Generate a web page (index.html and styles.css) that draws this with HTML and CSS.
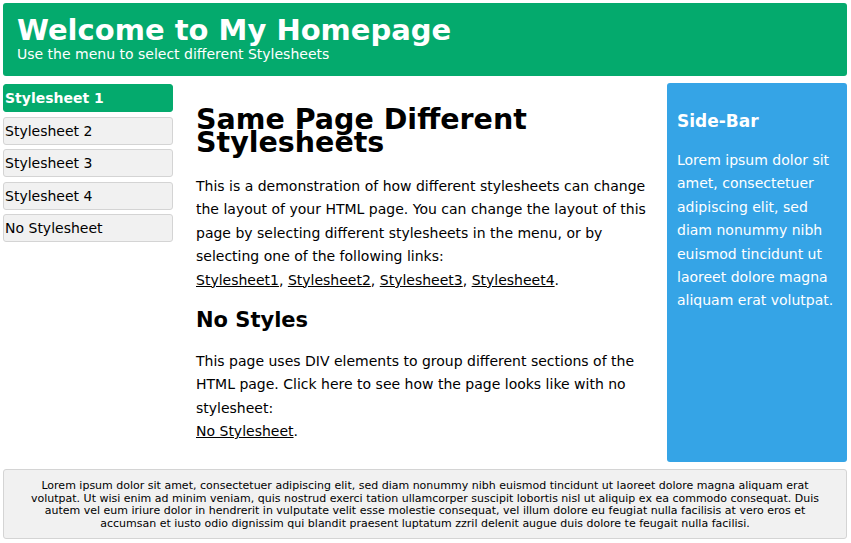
FILE: index.html
```html
<!DOCTYPE html>
<html>
<head>
<meta charset="utf-8">
<title>Same Page Different Stylesheets</title>
<link rel="stylesheet" href="styles.css">
</head>
<body>
<div class="header">
  <h1>Welcome to My Homepage</h1>
  <p>Use the menu to select different Stylesheets</p>
</div>
<div class="row">
  <div class="menu">
    <a class="menuitem active" href="#">Stylesheet 1</a>
    <a class="menuitem" href="#">Stylesheet 2</a>
    <a class="menuitem" href="#">Stylesheet 3</a>
    <a class="menuitem" href="#">Stylesheet 4</a>
    <a class="menuitem" href="#">No Stylesheet</a>
  </div>
  <div class="main">
    <h2 class="title">Same Page Different Stylesheets</h2>
    <p>This is a demonstration of how different stylesheets can change the layout of your HTML page. You can change the layout of this page by selecting different stylesheets in the menu, or by selecting one of the following links:<br><a href="#">Stylesheet1</a>, <a href="#">Stylesheet2</a>, <a href="#">Stylesheet3</a>, <a href="#">Stylesheet4</a>.</p>
    <h3 class="subtitle">No Styles</h3>
    <p>This page uses DIV elements to group different sections of the HTML page. Click here to see how the page looks like with no stylesheet:<br><a href="#">No Stylesheet</a>.</p>
  </div>
  <div class="sidebar">
    <h3>Side-Bar</h3>
    <p>Lorem ipsum dolor sit amet, consectetuer adipiscing elit, sed diam nonummy nibh euismod tincidunt ut laoreet dolore magna aliquam erat volutpat.</p>
  </div>
</div>
<div class="footer">
  <p>Lorem ipsum dolor sit amet, consectetuer adipiscing elit, sed diam nonummy nibh euismod tincidunt ut laoreet dolore magna aliquam erat volutpat. Ut wisi enim ad minim veniam, quis nostrud exerci tation ullamcorper suscipit lobortis nisl ut aliquip ex ea commodo consequat. Duis autem vel eum iriure dolor in hendrerit in vulputate velit esse molestie consequat, vel illum dolore eu feugiat nulla facilisis at vero eros et accumsan et iusto odio dignissim qui blandit praesent luptatum zzril delenit augue duis dolore te feugait nulla facilisi.</p>
</div>
</body>
</html>
```

FILE: styles.css
```css
body {
  margin: 3px 4px 3px 3px;
  font-family: Verdana, "DejaVu Sans", sans-serif;
  font-size: 14px;
  color: #000;
  background: #fff;
}
.header {
  background-color: #04aa6d;
  color: #fff;
  border-radius: 3px;
  padding: 10px 14px 14px;
  height: 49px;
}
.header h1 {
  margin: 0;
  font-size: 29px;
  line-height: 34px;
}
.header p {
  margin: 0;
  font-size: 14px;
  line-height: 14px;
}
.row {
  display: flex;
  align-items: flex-start;
  margin-top: 7px;
}
.menu {
  width: 170px;
  flex: none;
  display: flex;
  flex-direction: column;
  gap: 4.5px;
  padding-top: 1px;
}
.menuitem {
  display: block;
  box-sizing: border-box;
  height: 28px;
  line-height: 27px;
  padding: 0 1px;
  background: #f1f1f1;
  border: 1px solid #d4d4d4;
  border-radius: 3px;
  color: #000;
  text-decoration: none;
}
.menuitem.active {
  background: #04aa6d;
  border-color: #04aa6d;
  color: #fff;
  font-weight: bold;
}
.main {
  flex: 1;
  padding: 22px 12px 0 23px;
}
.main a {
  color: #000;
}
.title {
  margin: 0 0 21px;
  font-size: 28.5px;
  line-height: 23px;
  padding-top: 3px;
}
.main p {
  margin: 0 0 15px;
  line-height: 23.4px;
}
.subtitle {
  margin: 0 0 17px;
  font-size: 21px;
  line-height: 26px;
}
.sidebar {
  width: 180px;
  flex: none;
  box-sizing: border-box;
  background: #35a4e6;
  color: #fff;
  border-radius: 3px;
  padding: 27px 10px 30px;
  height: 379px;
}
.sidebar h3 {
  margin: 0 0 17px;
  font-size: 17px;
  line-height: 22px;
}
.sidebar p {
  margin: 0;
  line-height: 23.4px;
}
.footer {
  margin-top: 7px;
  background: #f1f1f1;
  border: 1px solid #d4d4d4;
  border-radius: 3px;
  padding: 10px 12px 7px;
  text-align: center;
}
.footer p {
  margin: 0;
  font-size: 11px;
  line-height: 12.7px;
}
```
